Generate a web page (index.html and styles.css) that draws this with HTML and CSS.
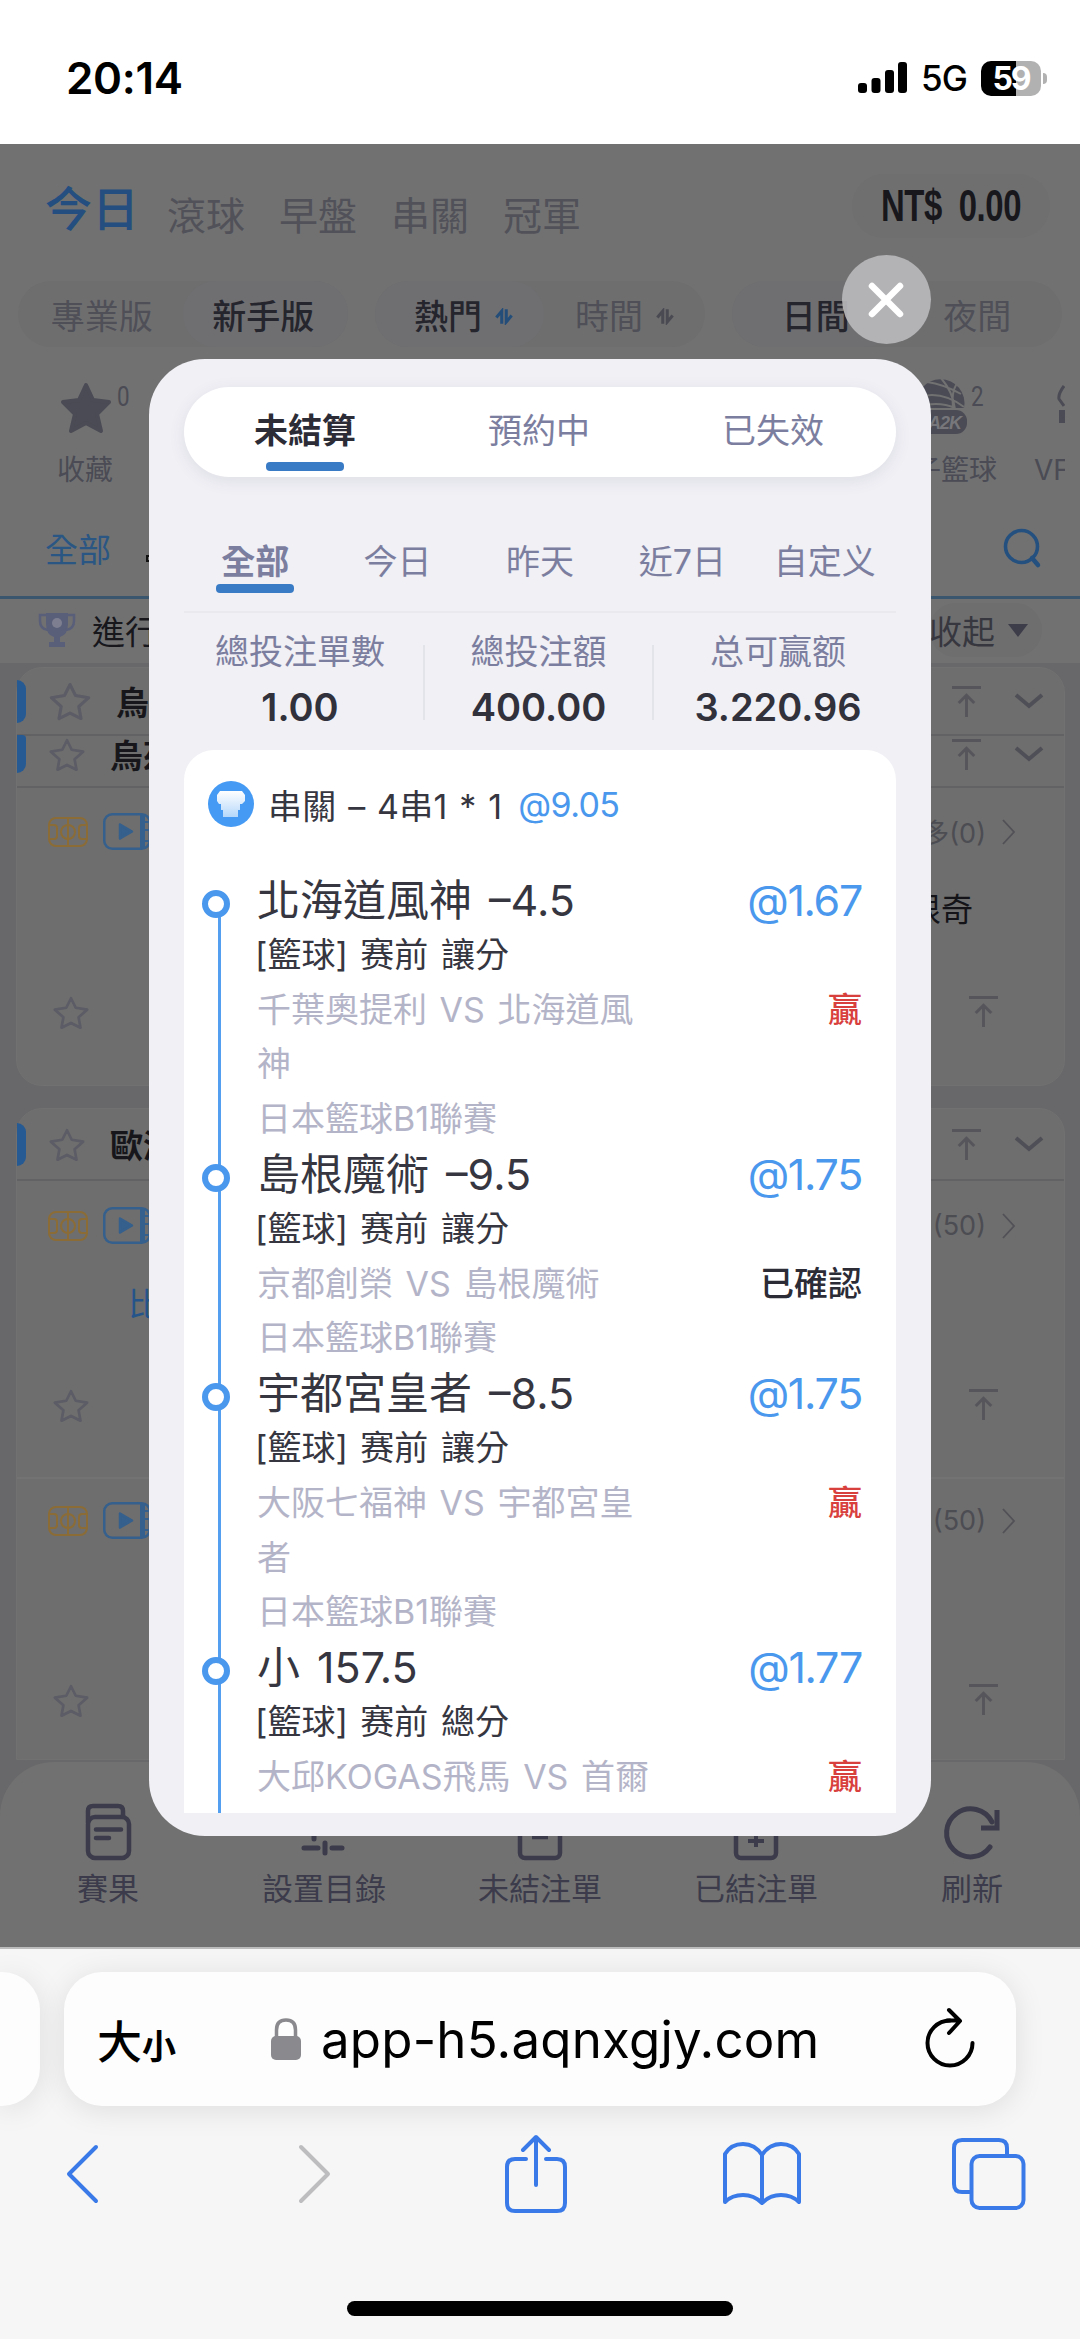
FILE: index.html
```html
<!DOCTYPE html>
<html lang="zh-Hant">
<head>
<meta charset="utf-8">
<title>未結算</title>
<link rel="stylesheet" href="styles.css">
</head>
<body>
<svg class="defs" width="0" height="0">
  <symbol id="star" viewBox="0 0 40 36"><path d="M20 3l5 10 12 2-9 8 2 11-10-5-10 5 2-11-9-8 12-2z" fill="none" stroke="currentColor" stroke-width="2.800" stroke-linejoin="round"/></symbol>
  <symbol id="totop" viewBox="0 0 30 34"><path d="M0 2.500h30M15 33V12M7 18.500l8-8 8 8" fill="none" stroke="currentColor" stroke-width="3"/></symbol>
  <symbol id="down" viewBox="0 0 30 18"><path d="M2 3l13 11L28 3" fill="none" stroke="currentColor" stroke-width="4"/></symbol>
  <symbol id="next" viewBox="0 0 14 26"><path d="M1 1l11 12L1 25" fill="none" stroke="currentColor" stroke-width="1.800"/></symbol>
  <symbol id="court" viewBox="0 0 40 30"><g fill="none" stroke="currentColor" stroke-width="2"><rect x="1" y="1" width="38" height="28" rx="7"/><circle cx="20" cy="15" r="7"/><path d="M20 1v28M1 8h5q3 0 3 3v8q0 3-3 3H1M39 8h-5q-3 0-3 3v8q0 3 3 3h5"/></g></symbol>
  <symbol id="video" viewBox="0 0 48 37"><rect x="1.250" y="1.250" width="45.500" height="34.500" rx="8" fill="none" stroke="currentColor" stroke-width="2.500"/><path d="M39.500 2v33" stroke="currentColor" stroke-width="5"/><path d="M42 9h4M42 17h4M42 28h4" stroke="currentColor" stroke-width="2"/><path d="M17 11.500l12 7-12 7z" fill="currentColor" stroke="currentColor" stroke-width="2.500" stroke-linejoin="round"/></symbol>
  <symbol id="sort" viewBox="0 0 20 18"><path d="M1.500 10l6-7v14M18.500 8l-6 7V1" fill="none" stroke="currentColor" stroke-width="3.400"/></symbol>
</svg>

<header class="status">
  <span class="clock">20:14</span>
  <svg class="signal" viewBox="0 0 49 32"><rect y="21" width="9" height="10" rx="3"/><rect x="13.500" y="16" width="9" height="15" rx="3"/><rect x="27" y="8" width="9" height="23" rx="3"/><rect x="40" y="0" width="9" height="31" rx="3"/></svg>
  <span class="net">5G</span>
  <span class="battery">59</span><i class="nub"></i>
</header>

<main class="app">
  <nav class="top">
    <b>今日</b><span>滾球</span><span>早盤</span><span>串關</span><span>冠軍</span>
    <div class="balance"><em>NT$ 0.00</em></div>
  </nav>
  <div class="filters">
    <div class="seg"><span>專業版</span><span class="on">新手版</span></div>
    <div class="seg"><span class="on">熱門<svg class="sort blue"><use href="#sort"/></svg></span><span>時間<svg class="sort"><use href="#sort"/></svg></span></div>
    <div class="seg"><span class="on">日間</span><span>夜間</span></div>
  </div>
  <div class="sports">
    <div class="sport fav">
      <svg viewBox="0 0 52 52"><path d="M26 3l7 15 16 2-12 12 4 17-15-8-15 8 4-17L3 20l16-2z" fill="currentColor" stroke="currentColor" stroke-width="4" stroke-linejoin="round"/></svg>
      <sup>0</sup><label>收藏</label>
    </div>
    <div class="sport hoop">
      <svg viewBox="0 0 76 56"><path d="M26 30a24 24 0 1 1 47 0z" fill="currentColor"/><path d="M25 20q24-9 48 9M24 30q22-8 40 0M50 0q12 14 14 31M66 5q-6 10-4 24M36 4q16 2 34 12" fill="none" stroke="#717172" stroke-width="2"/><rect x="4" y="32" width="72" height="24" rx="11" fill="currentColor"/><text x="25" y="50.500">BA2K</text></svg>
      <sup>2</sup><label>子籃球</label>
    </div>
    <div class="sport vr"><svg viewBox="0 0 8 40"><path d="M7 2q-6 8-5 13l5 7" fill="none" stroke="currentColor" stroke-width="3"/><rect x="2" y="26" width="6" height="13" fill="currentColor"/></svg><label>VF</label></div>
  </div>
  <div class="allbar"><span>全部</span><i></i><svg viewBox="0 0 38 40"><circle cx="18.500" cy="18.500" r="16" fill="none" stroke="currentColor" stroke-width="3.600"/><path d="M29 30l6 7" stroke="currentColor" stroke-width="4.500" stroke-linecap="round"/></svg></div>
  <div class="live">
    <svg viewBox="0 0 38 38"><path d="M8 2h22v10q0 12-8 14v5h5v5H11v-5h5v-5q-8-2-8-14z" fill="currentColor"/><path d="M8 4H2v6q0 8 8 9M30 4h6v6q0 8-8 9" fill="none" stroke="currentColor" stroke-width="2.500"/><circle cx="19" cy="12" r="5" fill="#7d7f90"/></svg>
    <span>進行</span><div class="fold">收起<i></i></div>
  </div>

  <div class="list">
    <section class="card first">
      <div class="league a"><i class="bar"></i><svg class="star big"><use href="#star"/></svg><b>烏</b><svg class="totop"><use href="#totop"/></svg><svg class="down"><use href="#down"/></svg></div>
      <div class="league b"><i class="bar"></i><svg class="star"><use href="#star"/></svg><b>烏茲</b><svg class="totop"><use href="#totop"/></svg><svg class="down"><use href="#down"/></svg></div>
      <div class="match m1">
        <div class="media"><svg class="court"><use href="#court"/></svg><svg class="video"><use href="#video"/></svg><span>多(0)</span><svg class="next"><use href="#next"/></svg></div>
        <div class="team right">根奇</div>
        <div class="acts"><svg class="star"><use href="#star"/></svg><svg class="totop"><use href="#totop"/></svg></div>
      </div>
    </section>
    <section class="card second">
      <div class="league c"><i class="bar"></i><svg class="star"><use href="#star"/></svg><b>歐洲</b><svg class="totop"><use href="#totop"/></svg><svg class="down"><use href="#down"/></svg></div>
      <div class="match m2">
        <div class="media"><svg class="court"><use href="#court"/></svg><svg class="video"><use href="#video"/></svg><span>(50)</span><svg class="next"><use href="#next"/></svg></div>
        <div class="team left">比</div>
        <div class="acts"><svg class="star"><use href="#star"/></svg><svg class="totop"><use href="#totop"/></svg></div>
      </div>
      <div class="match m3">
        <div class="media"><svg class="court"><use href="#court"/></svg><svg class="video"><use href="#video"/></svg><span>(50)</span><svg class="next"><use href="#next"/></svg></div>
        <div class="acts"><svg class="star"><use href="#star"/></svg><svg class="totop"><use href="#totop"/></svg></div>
      </div>
    </section>
  </div>

  <nav class="tabbar">
    <a><svg viewBox="0 0 56 58"><g fill="none" stroke="currentColor" stroke-width="4.500"><rect x="8" y="14" width="41" height="41" rx="7"/><path d="M8 20V8q0-5 5-5h25q5 0 5 5v6" /></g><path d="M16 26.500h25M16 35h13" stroke="currentColor" stroke-width="4.500" stroke-linecap="round"/></svg>賽果</a>
    <a><svg viewBox="0 0 56 58"><path d="M6 28h8M26 28h24M8 45h14M36 45h10M29 40v10M18 20v16" stroke="currentColor" stroke-width="5" stroke-linecap="round"/></svg>設置目錄</a>
    <a><svg viewBox="0 0 56 58"><rect x="8" y="8" width="40" height="47" rx="5" fill="none" stroke="currentColor" stroke-width="4.500"/><path d="M20 34h16" stroke="currentColor" stroke-width="4.500"/></svg>未結注單</a>
    <a><svg viewBox="0 0 56 58"><rect x="8" y="8" width="40" height="47" rx="5" fill="none" stroke="currentColor" stroke-width="4.500"/><path d="M28 28v16M20 38h16M21 31h14" stroke="currentColor" stroke-width="4"/></svg>已結注單</a>
    <a><svg viewBox="0 0 56 58"><path d="M46 44A24 24 0 1 1 48 19" fill="none" stroke="currentColor" stroke-width="5" stroke-linecap="round"/><path d="M53 7v18H37" fill="none" stroke="currentColor" stroke-width="5"/></svg>刷新</a>
  </nav>

  <button class="close"><svg viewBox="0 0 36 36"><path d="M4 4l28 28M32 4L4 32" stroke="#fff" stroke-width="6.500" stroke-linecap="round"/></svg></button>

  <div class="modal">
    <div class="states"><span class="on">未結算</span><span>預約中</span><span>已失效</span></div>
    <div class="dates"><span class="on">全部</span><span>今日</span><span>昨天</span><span>近7日</span><span>自定义</span></div>
    <div class="totals">
      <div><span>總投注單數</span><b>1.00</b></div>
      <div><span>總投注額</span><b>400.00</b></div>
      <div><span>总可赢额</span><b>3.220.96</b></div>
    </div>
    <div class="ticket">
      <div class="kind">
        <svg viewBox="0 0 46 46"><defs><linearGradient id="jersey" x1="0" y1="0" x2="0" y2="1"><stop offset="0" stop-color="#fff"/><stop offset="1" stop-color="#b5d8fb"/></linearGradient></defs><circle cx="23" cy="23" r="23" fill="#459af3"/><path d="M12 10h22l3 4v6l-3 3h-2v6h-2v7H15v-7h-2v-6h-2l-2-3v-6z" fill="url(#jersey)"/></svg>
        <span>串關 – 4串1 * 1</span><em>@9.05</em>
      </div>
      <div class="legs">
        <div class="leg"><h3>北海道風神 –4.5<em>@1.67</em></h3><p>[籃球] 赛前 讓分</p><div class="game"><span>千葉奧提利 VS 北海道風神</span><strong class="win">贏</strong></div><small>日本籃球B1聯賽</small></div>
        <div class="leg"><h3>島根魔術 –9.5<em>@1.75</em></h3><p>[籃球] 赛前 讓分</p><div class="game"><span>京都創榮 VS 島根魔術</span><strong>已確認</strong></div><small>日本籃球B1聯賽</small></div>
        <div class="leg"><h3>宇都宮皇者 –8.5<em>@1.75</em></h3><p>[籃球] 赛前 讓分</p><div class="game"><span>大阪七福神 VS 宇都宮皇者</span><strong class="win">贏</strong></div><small>日本籃球B1聯賽</small></div>
        <div class="leg"><h3>小 157.5<em>@1.77</em></h3><p>[籃球] 赛前 總分</p><div class="game"><span>大邱KOGAS飛馬 VS 首爾</span><strong class="win">贏</strong></div></div>
      </div>
    </div>
  </div>
</main>

<footer class="browser">
  <div class="address">
    <div class="prev"></div>
    <div class="url">
      <span class="size">大<small>小</small></span>
      <svg class="lock" viewBox="0 0 30 42"><rect y="18" width="30" height="24" rx="5" fill="#8a8a8e"/><path d="M5.500 20v-8q0-10 9.500-10t9.500 10v8" fill="none" stroke="#8a8a8e" stroke-width="3.500"/></svg>
      <span class="host">app-h5.aqnxgjy.com</span>
      <svg class="reload" viewBox="0 0 50 58"><path d="M25 10.500A22.500 22.500 0 1 0 47.500 33" fill="none" stroke="#000" stroke-width="4" stroke-linecap="round"/><path d="M24 0l11 11-11 12M22 10.500h12" fill="none" stroke="#000" stroke-width="4" stroke-linecap="round" stroke-linejoin="round"/></svg>
    </div>
  </div>
  <div class="tools">
    <svg class="back" viewBox="0 0 34 60"><path d="M31 3L4 30l27 27"/></svg>
    <svg class="fwd" viewBox="0 0 34 60"><path d="M3 3l27 27L3 57"/></svg>
    <svg class="share" viewBox="0 0 62 78"><path d="M21 24H10q-8 0-8 8v36q0 8 8 8h42q8 0 8-8V32q0-8-8-8H41M31 50V3M18 15L31 2l13 13"/></svg>
    <svg class="book" viewBox="0 0 78 64"><path d="M39 13Q32 2 20 2T2 12v48q7-7 18-7t19 8q8-8 19-8t18 7V12Q70 2 58 2T39 13zv48"/></svg>
    <svg class="tabs" viewBox="0 0 74 72"><rect x="19.500" y="18" width="52" height="52" rx="8"/><path d="M19 54h-9q-8 0-8-8V10q0-8 8-8h37q8 0 8 8v8"/></svg>
  </div>
  <i class="home"></i>
</footer>
</body>
</html>
```
FILE: styles.css
```css
*, *::before, *::after { box-sizing: border-box; margin: 0; }
body { width: 1080px; height: 2339px; overflow: hidden; background: #fff; font-family: Inter, "Noto Sans CJK TC", sans-serif; display: flex; flex-direction: column; }
svg { display: block; flex: none; overflow: visible; }
.defs { position: absolute; }
em, i { font-style: normal; }

.status { height: 144px; padding: 12px 33px 0 66px; display: flex; align-items: center; flex: none; }
.clock { font-size: 44px; font-weight: 600; margin-right: auto; letter-spacing: -0.3px; }
.signal { width: 49px; height: 32px; margin-right: 14px; }
.net { font-size: 35px; font-weight: 500; width: 45px; margin-right: 15px; letter-spacing: -1px; }
.battery { width: 60px; height: 35px; border-radius: 10px; background: linear-gradient(90deg, #000 59%, #b1b1b1 59%); color: #fff; font-size: 32px; font-weight: 700; line-height: 35px; text-align: center; letter-spacing: -2px; }
.nub { width: 4px; height: 11px; border-radius: 0 5px 5px 0; background: #b1b1b1; margin-left: 2px; }

/* page under the bet slip, already darkened by the overlay */
.app { height: 1803px; position: relative; background: #717172; color: #3c3c46; display: flex; flex-direction: column; flex: none; overflow: hidden; }
.top { height: 137px; padding: 30px 30px 0 45px; display: flex; align-items: flex-start; font-size: 39px; line-height: 62px; color: #515159; flex: none; }
.top b { color: #234e7f; font-size: 47px; font-weight: 500; margin-right: 28px; line-height: 70px; }
.top span { margin-right: 34px; line-height: 84px; }
.balance { margin-left: auto; width: 198px; height: 64px; border-radius: 32px; background: #6f6f70; display: flex; justify-content: center; white-space: nowrap; }
.balance em { font-family: "Liberation Sans", sans-serif; font-weight: 700; font-size: 45px; color: #17171c; transform: scaleX(.73); line-height: 64px; word-spacing: 11px; letter-spacing: -.5px; }
.filters { height: 71px; padding: 0 18px; display: flex; justify-content: space-between; flex: none; }
.seg { width: 330px; height: 66px; border-radius: 33px; background: #6e6e6f; display: flex; font-size: 34px; color: #4f4f58; }
.seg span { flex: 1; display: flex; align-items: center; justify-content: center; border-radius: 33px; }
.seg span:first-child { padding-left: 3px; }
.seg span:last-child { padding-right: 4px; }
.seg .on { background: #6f6f72; color: #25252d; font-weight: 500; }
.seg:nth-child(2) span:first-child { padding-left: 8px; }
.seg:nth-child(2) span:last-child { padding-right: 0; }
.sort { width: 18px; height: 17px; margin: 4px 0 0 13px; color: #4a4a53; }
.sort.blue { color: #244e79; }
.sports { height: 148px; position: relative; color: #4a4b54; flex: none; }
.sport { position: absolute; top: 30px; }
.sport label { display: block; font-size: 28px; line-height: 34px; white-space: nowrap; }
.sport sup { position: absolute; top: 0; font: 28px/30px Roboto, sans-serif; }
.fav { left: 57px; }
.fav svg { width: 52px; height: 52px; margin: 0 0 19px 3px; }
.fav sup { left: 60px; transform: scaleX(.8); transform-origin: left; }
.hoop { left: 891px; top: 26px; }
.hoop svg { width: 76px; height: 56px; margin-bottom: 19px; }
.hoop text { font: italic 900 18px "Liberation Sans", sans-serif; fill: #77777b; letter-spacing: -1px; }
.hoop sup { left: 80px; top: 4px; transform: scaleX(.8); transform-origin: left; }
.hoop label { margin-left: 22px; }
.vr { left: 1034px; width: 31px; overflow: hidden; }
.vr svg { width: 8px; height: 40px; margin: 2px 0 29px 23px; }
.allbar { height: 99px; border-bottom: 3px solid #39566e; padding: 0 39px 0 45px; display: flex; align-items: center; color: #2a5684; font-size: 33px; flex: none; }
.allbar i { width: 8px; height: 7px; border: 2px solid #111; margin: 20px auto 0 35px; }
.allbar svg { width: 38px; height: 40px; color: #24507f; }
.live { height: 64px; padding: 0 38px 2px; display: flex; align-items: center; font-size: 33px; color: #17171c; flex: none; }
.live svg { width: 38px; height: 38px; color: #595e79; margin-right: 16px; }
.fold { margin-left: auto; height: 54px; display: flex; align-items: center; padding-right: 14px; border-radius: 27px; background: #6e6e6f; color: #37373f; }
.fold i { border: 10px solid transparent; border-top: 13px solid #3d3d4a; border-bottom: 0; margin-left: 13px; }

.list { flex: 1; background: #68686a; padding: 4px 15px 0 16px; display: flex; flex-direction: column; gap: 22px; }
.card { background: #6e6e6e; border: 1px solid #717171; border-radius: 26px; flex: none; }
.first { height: 419px; }
.second { height: 652px; border-radius: 26px 26px 0 0; }
.league { display: flex; align-items: center; border-bottom: 2px solid #626264; padding-right: 20px; font-size: 33px; color: #17171b; }
.league .bar { width: 9px; height: 43px; border-radius: 0 10px 10px 0; background: #265a92; margin-right: 22px; }
.league b { font-weight: 700; margin-right: auto; }
.league .down { margin-left: 33px; }
.a { height: 68px; }
.b { height: 52px; padding-bottom: 14px; }
.b .bar { height: 38px; border-radius: 0 4px 10px 0; }
.c { height: 72px; }
.star { width: 38px; height: 35px; color: #5b5c65; margin-right: 24px; }
.star.big { width: 44px; height: 40px; }
.totop { width: 29px; height: 33px; color: #55555b; }
.down { width: 30px; height: 18px; color: #4f4f57; }
.match { padding: 25px 48px 0 31px; display: flex; flex-direction: column; }
.media { display: flex; align-items: center; height: 37px; font-size: 27px; color: #4c4c53; }
.court { width: 40px; height: 30px; color: #8b6c36; margin-right: 15px; }
.video { width: 48px; height: 37px; color: #355f8c; margin-right: auto; }
.next { width: 14px; height: 26px; margin-left: 16px; color: #515157; }
.team { font-size: 32px; line-height: 40px; }
.right { align-self: flex-end; margin: 40px 43px 0 0; color: #141418; }
.left { color: #24548a; margin: 41px 0 0 80px; }
.acts { display: flex; justify-content: space-between; padding: 0 18px 0 4px; }
.m1 .acts { margin-top: 65px; }
.m2 { height: 298px; padding-top: 26px; border-bottom: 2px solid #737374; }
.m2 .acts { margin-top: 63px; }
.m3 { padding-top: 23px; }
.m3 .acts { margin-top: 144px; }

.tabbar { position: absolute; left: 0; right: 0; top: 1618px; height: 185px; background: #717171; border-radius: 54px 54px 0 0; display: flex; padding-top: 41px; color: #3b3b4b; font-size: 31px; }
.tabbar a { flex: 1; display: flex; flex-direction: column; align-items: center; line-height: 36px; gap: 10px; }
.tabbar svg { width: 56px; height: 58px; }

.close { position: absolute; left: 842px; top: 111px; width: 89px; height: 89px; border: 0; border-radius: 50%; background: rgba(184,184,186,.93); display: flex; align-items: center; justify-content: center; padding: 0 1px 0 0; }
.close svg { width: 36px; height: 36px; }
.modal { position: absolute; left: 149px; top: 215px; width: 782px; height: 1477px; border-radius: 56px; background: #f0f0f5; padding: 28px 35px 23px; display: flex; flex-direction: column; font-size: 34px; color: #7c7e9f; }
.states { height: 90px; flex: none; border-radius: 45px; background: #fff; box-shadow: 0 4px 16px rgba(70,70,110,.1); display: flex; padding: 0 6px 0 4px; }
.states span, .dates span { flex: 1; display: flex; justify-content: center; position: relative; line-height: 87px; }
.states .on { color: #2c2c37; font-weight: 700; }
.states .on::after, .dates .on::after { content: ""; position: absolute; left: 50%; margin-left: -39px; width: 78px; height: 9px; border-radius: 4px; background: #3a7bc6; bottom: 6px; }
.dates { height: 94px; margin-top: 42px; flex: none; border-bottom: 2px solid #e9e9ee; display: flex; }
.dates span { line-height: 86px; }
.dates .on { font-weight: 700; }
.dates .on::after { bottom: 18px; }
.totals { height: 137px; flex: none; display: grid; grid-template-columns: 239px 229px 244px; padding: 20px 0 0; align-content: start; }
.totals div { display: flex; flex-direction: column; align-items: center; position: relative; line-height: 38px; padding-right: 7px; }
.totals div:nth-child(2) { padding: 0 0 0 2px; }
.totals div:nth-child(3) { padding: 0 0 0 8px; }
.totals div + div::before { content: ""; position: absolute; left: 0; top: 12px; width: 2px; height: 75px; background: #e3e3ea; }
.totals b { font-size: 38px; font-weight: 600; color: #31313c; margin-top: 17px; }
.ticket { flex: 1; min-height: 0; background: #fff; border-radius: 30px 30px 0 0; overflow: hidden; color: #363641; }
.kind { display: flex; align-items: center; padding: 31px 24px 0; height: 77px; letter-spacing: .2px; word-spacing: 2px; }
.kind svg { width: 46px; height: 46px; margin-right: 14px; }
.kind em { margin-left: 16px; letter-spacing: -.6px; }
.ticket em { color: #4a98ee; }
.legs { margin-top: 46px; }
.leg { position: relative; padding: 0 34px 0 73px; line-height: 54.800px; word-spacing: 3px; }
.leg::before { content: ""; position: absolute; left: 34px; width: 3px; top: 30px; height: 100%; background: #559ff0; }
.leg:last-child::before { height: 300px; }
.leg::after { content: ""; position: absolute; left: 18px; top: 17px; width: 28px; height: 28px; border-radius: 50%; border: 6px solid #4a98ee; background: #fff; z-index: 1; }
.leg h3 { font-size: 43px; font-weight: 400; display: flex; justify-content: space-between; word-spacing: 5px; }
.leg h3 em { letter-spacing: -1.300px; }
.leg p { margin-left: -2px; }
.game { display: flex; justify-content: space-between; align-items: flex-start; }
.game span { width: 402px; color: #b4b4c8; }
.game strong { font-weight: 500; color: #2c2c37; }
.game .win { color: #d8403d; }
.leg small { display: block; font-size: 34px; color: #b4b4c8; }

.browser { flex: 1; background: #f6f6f6; border-top: 2px solid #bcbcbd; display: flex; flex-direction: column; align-items: center; }
.address { width: 1080px; margin-top: 23px; display: flex; gap: 24px; }
.prev { width: 40px; border-radius: 0 38px 38px 0; background: #fdfdfd; box-shadow: 0 4px 30px rgba(0,0,0,.1); }
.url { width: 952px; height: 134px; border-radius: 38px; background: #fdfdfd; box-shadow: 0 4px 30px rgba(0,0,0,.1); display: flex; align-items: center; padding: 0 41px 0 33px; color: #000; }
.size { font-size: 45px; font-weight: 500; width: 174px; white-space: nowrap; }
.size small { font-size: 34px; font-weight: 700; }
.lock { width: 30px; height: 42px; margin-right: 20px; }
.host { font-size: 51px; letter-spacing: .2px; white-space: nowrap; margin-right: auto; }
.reload { width: 50px; height: 58px; }
.tools { width: 1080px; height: 78px; margin-top: 29px; padding: 0 54px 0 65px; display: flex; justify-content: space-between; align-items: center; }
.tools svg { fill: none; stroke: #3a7ae8; stroke-width: 4; stroke-linecap: round; stroke-linejoin: round; }
.back, .fwd { width: 34px; height: 60px; }
.tools .fwd { stroke: #bdbdbf; margin-left: 48px; }
.share { width: 62px; height: 78px; margin-left: 22px; }
.book { width: 78px; height: 64px; margin-left: 6px; }
.tabs { width: 74px; height: 72px; }
.home { width: 386px; height: 15px; border-radius: 8px; background: #000; margin-top: 88px; }
```
